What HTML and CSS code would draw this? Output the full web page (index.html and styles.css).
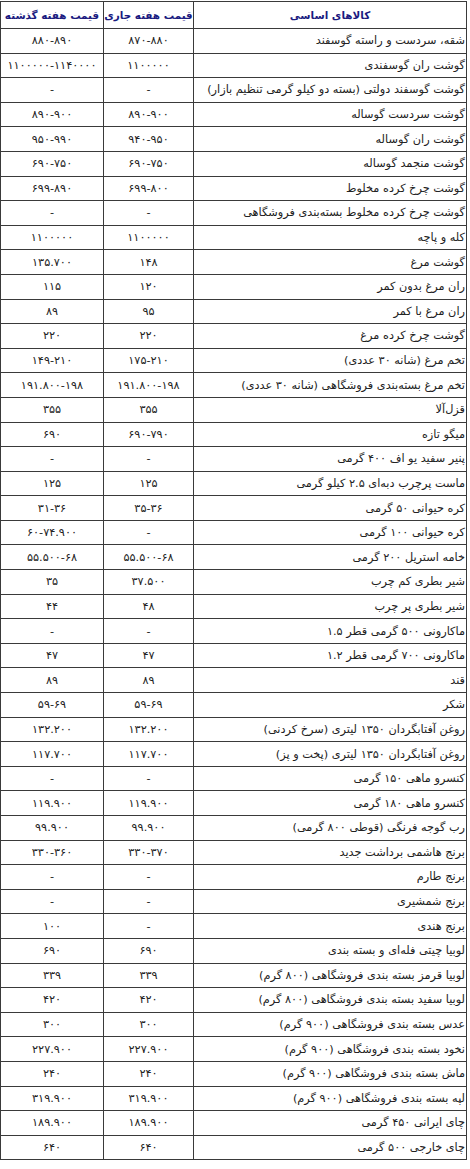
FILE: index.html
```html
<!DOCTYPE html>
<html lang="fa" dir="rtl">
<head>
<meta charset="utf-8">
<title>قیمت کالاهای اساسی</title>
<link rel="stylesheet" href="styles.css">
</head>
<body>
<table class="prices">
  <colgroup>
    <col class="c-name">
    <col class="c-cur">
    <col class="c-prev">
  </colgroup>
  <thead>
    <tr>
      <th>کالاهای اساسی</th>
      <th>قیمت هفته جاری</th>
      <th>قیمت هفته گذشته</th>
    </tr>
  </thead>
  <tbody>
    <tr><td>شقه، سردست و راسته گوسفند</td><td>۸۷۰-۸۸۰</td><td>۸۸۰-۸۹۰</td></tr>
    <tr><td>گوشت ران گوسفندی</td><td>۱۱۰۰۰۰۰</td><td>۱۱۰۰۰۰۰-۱۱۴۰۰۰۰</td></tr>
    <tr><td>گوشت گوسفند دولتی (بسته دو کیلو گرمی تنظیم بازار)</td><td>-</td><td>-</td></tr>
    <tr><td>گوشت سردست گوساله</td><td>۸۹۰-۹۰۰</td><td>۸۹۰-۹۰۰</td></tr>
    <tr><td>گوشت ران گوساله</td><td>۹۴۰-۹۵۰</td><td>۹۵۰-۹۹۰</td></tr>
    <tr><td>گوشت منجمد گوساله</td><td>۶۹۰-۷۵۰</td><td>۶۹۰-۷۵۰</td></tr>
    <tr><td>گوشت چرخ کرده مخلوط</td><td>۶۹۹-۸۰۰</td><td>۶۹۹-۸۹۰</td></tr>
    <tr><td>گوشت چرخ کرده مخلوط بسته‌بندی فروشگاهی</td><td>-</td><td>-</td></tr>
    <tr><td>کله و پاچه</td><td>۱۱۰۰۰۰۰</td><td>۱۱۰۰۰۰۰</td></tr>
    <tr><td>گوشت مرغ</td><td>۱۴۸</td><td>۱۳۵.۷۰۰</td></tr>
    <tr><td>ران مرغ بدون کمر</td><td>۱۲۰</td><td>۱۱۵</td></tr>
    <tr><td>ران مرغ با کمر</td><td>۹۵</td><td>۸۹</td></tr>
    <tr><td>گوشت چرخ کرده مرغ</td><td>۲۲۰</td><td>۲۲۰</td></tr>
    <tr><td>تخم مرغ (شانه ۳۰ عددی)</td><td>۱۷۵-۲۱۰</td><td>۱۴۹-۲۱۰</td></tr>
    <tr><td>تخم مرغ بسته‌بندی فروشگاهی (شانه ۳۰ عددی)</td><td>۱۹۱.۸۰۰-۱۹۸</td><td>۱۹۱.۸۰۰-۱۹۸</td></tr>
    <tr><td>قزل‌آلا</td><td>۳۵۵</td><td>۳۵۵</td></tr>
    <tr><td>میگو تازه</td><td>۶۹۰-۷۹۰</td><td>۶۹۰</td></tr>
    <tr><td>پنیر سفید یو اف ۴۰۰ گرمی</td><td>-</td><td>-</td></tr>
    <tr><td>ماست پرچرب دبه‌ای ۲.۵ کیلو گرمی</td><td>۱۲۵</td><td>۱۲۵</td></tr>
    <tr><td>کره حیوانی ۵۰ گرمی</td><td>۳۵-۳۶</td><td>۳۱-۳۶</td></tr>
    <tr><td>کره حیوانی ۱۰۰ گرمی</td><td>-</td><td>۶۰-۷۴.۹۰۰</td></tr>
    <tr><td>خامه استریل ۲۰۰ گرمی</td><td>۵۵.۵۰۰-۶۸</td><td>۵۵.۵۰۰-۶۸</td></tr>
    <tr><td>شیر بطری کم چرب</td><td>۳۷.۵۰۰</td><td>۳۵</td></tr>
    <tr><td>شیر بطری پر چرب</td><td>۴۸</td><td>۴۴</td></tr>
    <tr><td>ماکارونی ۵۰۰ گرمی قطر ۱.۵</td><td>-</td><td>-</td></tr>
    <tr><td>ماکارونی ۷۰۰ گرمی قطر ۱.۲</td><td>۴۷</td><td>۴۷</td></tr>
    <tr><td>قند</td><td>۸۹</td><td>۸۹</td></tr>
    <tr><td>شکر</td><td>۵۹-۶۹</td><td>۵۹-۶۹</td></tr>
    <tr><td>روغن آفتابگردان ۱۳۵۰ لیتری (سرخ کردنی)</td><td>۱۳۲.۲۰۰</td><td>۱۳۲.۲۰۰</td></tr>
    <tr><td>روغن آفتابگردان ۱۳۵۰ لیتری (پخت و پز)</td><td>۱۱۷.۷۰۰</td><td>۱۱۷.۷۰۰</td></tr>
    <tr><td>کنسرو ماهی ۱۵۰ گرمی</td><td>-</td><td>-</td></tr>
    <tr><td>کنسرو ماهی ۱۸۰ گرمی</td><td>۱۱۹.۹۰۰</td><td>۱۱۹.۹۰۰</td></tr>
    <tr><td>رب گوجه فرنگی (قوطی ۸۰۰ گرمی)</td><td>۹۹.۹۰۰</td><td>۹۹.۹۰۰</td></tr>
    <tr><td>برنج هاشمی برداشت جدید</td><td>۳۳۰-۳۷۰</td><td>۳۳۰-۳۶۰</td></tr>
    <tr><td>برنج طارم</td><td>-</td><td>-</td></tr>
    <tr><td>برنج شمشیری</td><td>-</td><td>-</td></tr>
    <tr><td>برنج هندی</td><td>-</td><td>۱۰۰</td></tr>
    <tr><td>لوبیا چیتی فله‌ای و بسته بندی</td><td>۶۹۰</td><td>۶۹۰</td></tr>
    <tr><td>لوبیا قرمز بسته بندی فروشگاهی (۸۰۰ گرم)</td><td>۳۳۹</td><td>۳۳۹</td></tr>
    <tr><td>لوبیا سفید بسته بندی فروشگاهی (۸۰۰ گرم)</td><td>۴۲۰</td><td>۴۲۰</td></tr>
    <tr><td>عدس بسته بندی فروشگاهی (۹۰۰ گرم)</td><td>۳۰۰</td><td>۳۰۰</td></tr>
    <tr><td>نخود بسته بندی فروشگاهی (۹۰۰ گرم)</td><td>۲۲۷.۹۰۰</td><td>۲۲۷.۹۰۰</td></tr>
    <tr><td>ماش بسته بندی فروشگاهی (۹۰۰ گرم)</td><td>۲۴۰</td><td>۲۴۰</td></tr>
    <tr><td>لپه بسته بندی فروشگاهی (۹۰۰ گرم)</td><td>۳۱۹.۹۰۰</td><td>۳۱۹.۹۰۰</td></tr>
    <tr><td>چای ایرانی ۴۵۰ گرمی</td><td>۱۸۹.۹۰۰</td><td>۱۸۹.۹۰۰</td></tr>
    <tr><td>چای خارجی ۵۰۰ گرمی</td><td>۶۴۰</td><td>۶۴۰</td></tr>
  </tbody>
</table>
</body>
</html>
```
FILE: styles.css
```css
html, body {
  margin: 0;
  padding: 0;
  background: #ffffff;
}
body {
  padding: 1px 3px 0 1px;
  font-family: "DejaVu Sans", "Noto Sans", sans-serif;
  color: #222222;
}
.prices {
  direction: rtl;
  border-collapse: collapse;
  width: 466px;
  table-layout: fixed;
  font-size: 11.3px;
}
.c-name { width: 273px; }
.c-cur { width: 90px; }
.c-prev { width: 103px; }
.prices th,
.prices td {
  border: 1px solid #3a3a3a;
  padding: 0 2px;
  white-space: nowrap;
  overflow: hidden;
}
.prices th {
  height: 26px;
  color: #1a1a80;
  font-weight: bold;
  font-size: 10.4px;
  text-align: center;
  padding: 0;
}
.prices td {
  height: 23.6px;
  text-align: center;
}
.prices td:first-child {
  text-align: right;
  padding-right: 1px;
}
```
